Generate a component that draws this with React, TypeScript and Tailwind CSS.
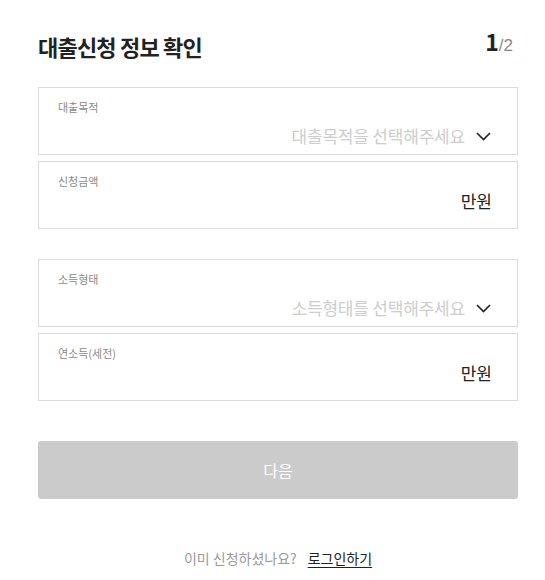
const FONT = "font-['Noto_Sans_CJK_KR','Noto_Sans',sans-serif]";

function Chevron() {
  return (
    <svg width="15" height="9" viewBox="0 0 15 9" fill="none" className="ml-[11px] mt-[1px]">
      <polyline points="1,1 7.5,7.5 14,1" stroke="#222" strokeWidth="1.6" />
    </svg>
  );
}

function SelectBox({ label, placeholder }: { label: string; placeholder: string }) {
  return (
    <div className="h-[68px] border border-[#dcdcdc] bg-white pt-[11px] pl-[19px] pr-[26px] flex flex-col">
      <span className="text-[11px] leading-[16px] text-[#8a8a8a]">{label}</span>
      <div className="mt-[9px] flex items-center justify-end h-[24px]">
        <span className="text-[17px] leading-[24px] text-[#cdcdcd] tracking-[-0.2px]">{placeholder}</span>
        <Chevron />
      </div>
    </div>
  );
}

function InputBox({ label }: { label: string }) {
  return (
    <div className="h-[68px] border border-[#dcdcdc] bg-white pt-[11px] pl-[19px] pr-[25px] flex flex-col">
      <span className="text-[11px] leading-[16px] text-[#8a8a8a]">{label}</span>
      <div className="flex items-center justify-end h-[24px]">
        <span className="text-[17px] leading-[24px] text-[#222]">만원</span>
      </div>
    </div>
  );
}

export default function App() {
  return (
    <div className={`min-h-[580px] w-full bg-white ${FONT}`}>
      <div className="ml-[38px] w-[480px] pt-[31px]">
        <div className="flex items-end justify-between h-[30px] pr-[5px]">
          <h1 className="text-[22px] leading-[30px] font-bold text-[#222] tracking-[-0.8px]">대출신청 정보 확인</h1>
          <div className="flex items-baseline leading-[30px]">
            <span className="text-[23px] font-bold text-[#222]">1</span>
            <span className="text-[17px] text-[#888] font-['Liberation_Sans',sans-serif]">/2</span>
          </div>
        </div>

        <div className="mt-[26px] flex flex-col gap-[6px]">
          <SelectBox label="대출목적" placeholder="대출목적을 선택해주세요" />
          <InputBox label="신청금액" />
        </div>

        <div className="mt-[30px] flex flex-col gap-[6px]">
          <SelectBox label="소득형태" placeholder="소득형태를 선택해주세요" />
          <InputBox label="연소득(세전)" />
        </div>

        <button className="mt-[40px] w-full h-[58px] rounded-[3px] bg-[#cbcbcb] text-white text-[16px]">
          다음
        </button>

        <div className="mt-[48px] flex justify-center items-center gap-[11px] text-[14px] leading-[22px]">
          <span className="text-[#9a9a9a]">이미 신청하셨나요?</span>
          <a className="text-[#222] underline underline-offset-[3px]">로그인하기</a>
        </div>
      </div>
    </div>
  );
}
